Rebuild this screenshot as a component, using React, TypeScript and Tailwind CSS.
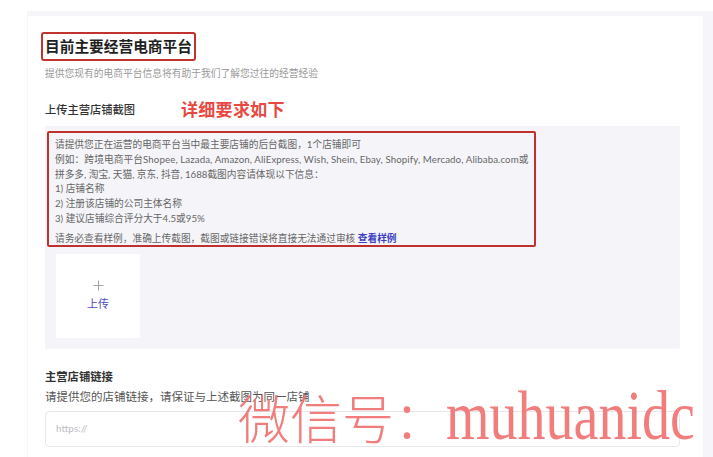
export default function App() {
  const cjk = { fontFamily: '"Lato", "Noto Sans CJK SC", sans-serif' };
  return (
    <div className="h-[457px] w-[713px] overflow-hidden bg-white pl-[27px] pt-[11px]" style={cjk}>
      <div className="h-full bg-[#f6f6fa] pl-[1px] pr-[10px] pt-[5px]">
        <div className="relative h-full bg-white pl-[17px] pr-[23px] pt-[16px]">
          {/* section 1 */}
          <div className="-ml-[4px] inline-block rounded-[3px] border-2 border-[#c0332e] px-[2px] text-[14.7px] font-bold leading-[25px] text-[#1f1f1f]">
            目前主要经营电商平台
          </div>
          <p className="mt-[5px] text-[9.75px] leading-[14px] text-[#9a9a9a]">
            提供您现有的电商平台信息将有助于我们了解您过往的经营经验
          </p>
          <div className="mt-[19px] flex h-[22px] items-center">
            <span className="w-[136px] text-[11.25px] font-medium text-[#333]">上传主营店铺截图</span>
            <span className="text-[17px] font-bold tracking-[0.3px] text-[#e8483f]">详细要求如下</span>
          </div>

          <div className="mt-[5px] bg-[#f5f5f9] pb-[11px] pl-[10px] pt-[11px]">
            <div className="relative text-[9.7px] leading-[14.8px] text-[#666]">
              <span className="pointer-events-none absolute -left-[8px] -top-[6px] h-[116px] w-[489px] rounded-[2px] border-2 border-[#c0302d]" />
              <p>请提供您正在运营的电商平台当中最主要店铺的后台截图，1个店铺即可</p>
              <p className="tracking-[0.1px]">例如：跨境电商平台Shopee, Lazada, Amazon, AliExpress, Wish, Shein, Ebay, Shopify, Mercado, Alibaba.com或</p>
              <p>拼多多, 淘宝, 天猫, 京东, 抖音, 1688截图内容请体现以下信息：</p>
              <p>1) 店铺名称</p>
              <p>2) 注册该店铺的公司主体名称</p>
              <p>3) 建议店铺综合评分大于4.5或95%</p>
              <p className="mt-[5px]">
                请务必查看样例，准确上传截图，截图或链接错误将直接无法通过审核{' '}
                <span className="font-bold text-[#3f3fc6]">查看样例</span>
              </p>
            </div>
            <div className="ml-[1px] mt-[8px] flex h-[84px] w-[84px] flex-col items-center justify-center bg-white">
              <svg width="11" height="11" viewBox="0 0 11 11" className="mb-[6px]">
                <path d="M5.5 0.5v10M0.5 5.5h10" stroke="#9a9aa4" strokeWidth="0.9" fill="none" />
              </svg>
              <span className="text-[11px] leading-[14px] text-[#4c4cc8]">上传</span>
            </div>
          </div>

          {/* section 2 */}
          <p className="mt-[20px] text-[11.3px] font-bold leading-[16px] text-[#333]">主营店铺链接</p>
          <p className="mt-[4px] text-[11.5px] leading-[16px] text-[#555]">
            请提供您的店铺链接，请保证与上述截图为同一店铺
          </p>
          <div className="mt-[6px] flex h-[36px] items-center rounded-[4px] border border-[#e6e6ec] bg-white pl-[10px] text-[10px] text-[#bdbdc4]">
            https://
          </div>

          {/* watermark */}
          <div className="pointer-events-none absolute left-[210px] top-[365px] flex items-baseline whitespace-nowrap text-[#ef6f6f]/90">
            <span className="text-[52px] font-light leading-[70px]" style={{ fontFamily: '"Noto Sans CJK SC", sans-serif' }}>
              微信号：
            </span>
            <span
              className="inline-block origin-left scale-x-[0.8] text-[70px] leading-[70px]"
              style={{ fontFamily: '"Liberation Serif", serif' }}
            >
              muhuanidc
            </span>
          </div>
        </div>
      </div>
    </div>
  );
}
